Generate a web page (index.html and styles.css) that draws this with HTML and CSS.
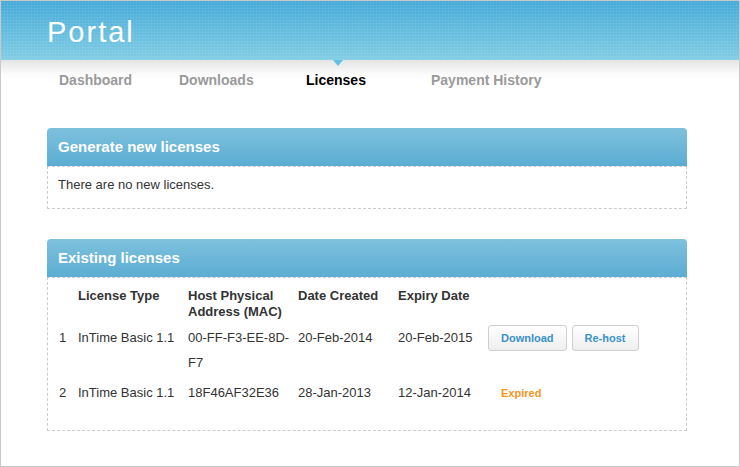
FILE: index.html
```html
<!DOCTYPE html>
<html>
<head>
<meta charset="utf-8">
<title>Portal</title>
<link rel="stylesheet" href="styles.css">
</head>
<body>
<div class="page">
  <header class="topbar">
    <h1 class="brand">Portal</h1>
  </header>
  <div class="content">
    <nav class="nav">
      <a class="nav-item nav-dashboard">Dashboard</a>
      <a class="nav-item nav-downloads">Downloads</a>
      <a class="nav-item nav-licenses is-active">Licenses</a>
      <a class="nav-item nav-payments">Payment History</a>
    </nav>

    <section class="panel panel-first">
      <div class="panel-head">Generate new licenses</div>
      <div class="panel-body panel-body-text">There are no new licenses.</div>
    </section>

    <section class="panel panel-second">
      <div class="panel-head">Existing licenses</div>
      <div class="panel-body panel-body-table">
        <table class="lic-table">
          <colgroup>
            <col class="c-num">
            <col class="c-type">
            <col class="c-mac">
            <col class="c-created">
            <col class="c-expiry">
            <col class="c-actions">
          </colgroup>
          <thead>
            <tr>
              <th></th>
              <th>License Type</th>
              <th>Host Physical Address (MAC)</th>
              <th>Date Created</th>
              <th>Expiry Date</th>
              <th></th>
            </tr>
          </thead>
          <tbody>
            <tr>
              <td>1</td>
              <td>InTime Basic 1.1</td>
              <td>00-FF-F3-EE-8D-F7</td>
              <td>20-Feb-2014</td>
              <td>20-Feb-2015</td>
              <td><div class="actions"><button class="btn">Download</button><button class="btn">Re-host</button></div></td>
            </tr>
            <tr>
              <td>2</td>
              <td>InTime Basic 1.1</td>
              <td>18F46AF32E36</td>
              <td>28-Jan-2013</td>
              <td>12-Jan-2014</td>
              <td><span class="expired">Expired</span></td>
            </tr>
          </tbody>
        </table>
      </div>
    </section>
  </div>
</div>
</body>
</html>
```

FILE: styles.css
```css
* { box-sizing: border-box; }
html, body { margin: 0; padding: 0; background: #fff; }
body { font-family: "Liberation Sans", Arial, sans-serif; color: #333; }

.page {
  width: 740px;
  height: 467px;
  border: 1px solid #c9c9c9;
  overflow: hidden;
  background: #fff;
}

.topbar {
  height: 59px;
  padding: 14px 0 0 46px;
  background-color: #5dbadf;
  background-image:
    repeating-linear-gradient(90deg, rgba(255,255,255,0.06) 0 1px, transparent 1px 3px),
    repeating-linear-gradient(0deg, rgba(255,255,255,0.06) 0 1px, transparent 1px 3px),
    linear-gradient(#45aad8, #81cde4);
}
.brand {
  margin: 0;
  font-size: 29px;
  line-height: 34px;
  font-weight: normal;
  letter-spacing: 2px;
  color: #fff;
}

.content {
  padding: 0 52px 0 46px;
  background: linear-gradient(#e4e4e4, #fbfbfb 14px, #fff 20px) no-repeat;
  background-size: 100% 30px;
}

.nav {
  display: flex;
  padding: 10px 0 0 12px;
  height: 30px;
}
.nav-item {
  position: relative;
  font-size: 14px;
  line-height: 20px;
  font-weight: bold;
  color: #9a9a9a;
  white-space: nowrap;
}
.nav-dashboard { width: 120px; }
.nav-downloads { width: 127px; }
.nav-licenses { width: 125px; }
.nav-item.is-active { color: #000; }
.nav-item.is-active::before {
  content: "";
  position: absolute;
  top: -10px;
  left: 27px;
  border-left: 5px solid transparent;
  border-right: 5px solid transparent;
  border-top: 6px solid #5fc2e3;
}

.panel { width: 640px; }
.panel-first { margin-top: 38px; }
.panel-second { margin-top: 30px; }

.panel-head {
  height: 38px;
  line-height: 38px;
  padding-left: 11px;
  font-size: 15px;
  font-weight: bold;
  color: #fff;
  border-radius: 4px 4px 0 0;
  background: linear-gradient(#7ec1dd, #5badd3);
}
.panel-body {
  border: 1px dashed #cccccc;
}
.panel-body-text {
  padding: 9px 10px 14px;
  font-size: 13px;
  line-height: 18px;
}
.panel-body-table {
  padding: 10px 10px 22px 11px;
}

.lic-table {
  border-collapse: collapse;
  border-spacing: 0;
  table-layout: fixed;
  width: 618px;
  font-size: 13px;
}
.c-num { width: 19px; }
.c-type { width: 110px; }
.c-mac { width: 110px; }
.c-created { width: 100px; }
.c-expiry { width: 90px; }

.lic-table th {
  text-align: left;
  vertical-align: top;
  font-weight: bold;
  line-height: 16px;
  padding: 0 6px 2px 0;
  color: #333;
}
.lic-table td {
  vertical-align: top;
  line-height: 25px;
  padding: 3px 6px 2px 0;
  color: #333;
}

.actions { display: flex; gap: 5px; }
.btn {
  height: 26px;
  padding: 0 12px;
  border: 1px solid #cfcfcf;
  border-radius: 3px;
  background: linear-gradient(#ffffff, #eeeeee);
  font-family: "Liberation Sans", Arial, sans-serif;
  font-size: 11px;
  font-weight: bold;
  color: #3a92c9;
  line-height: 24px;
  cursor: pointer;
}
.expired {
  margin-left: 13px;
  font-size: 11px;
  font-weight: bold;
  color: #f7941d;
}
```
